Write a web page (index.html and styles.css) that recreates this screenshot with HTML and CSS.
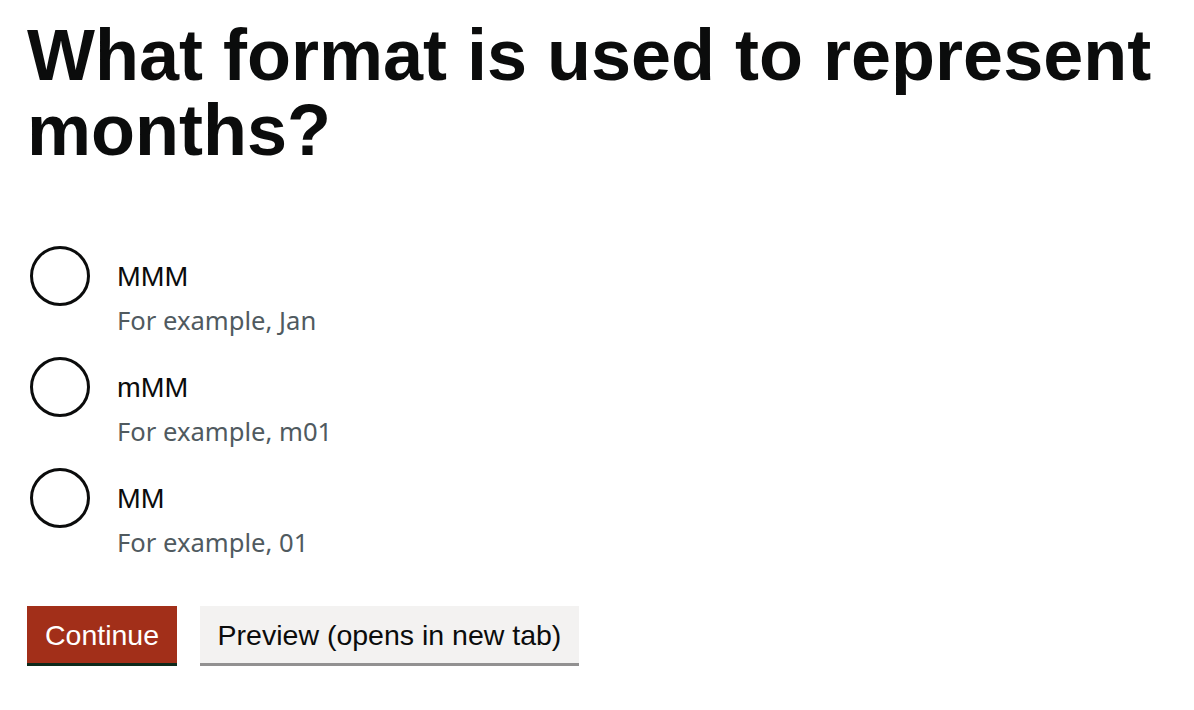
FILE: index.html
```html
<!DOCTYPE html>
<html lang="en">
<head>
<meta charset="utf-8">
<title>What format is used to represent months?</title>
<link rel="stylesheet" href="styles.css">
</head>
<body>
<main class="page">
  <h1 class="heading">What format is used to represent months?</h1>
  <div class="radios">
    <div class="radio-item">
      <span class="radio-circle"></span>
      <div class="radio-text">
        <div class="radio-label">MMM</div>
        <div class="radio-hint">For example, Jan</div>
      </div>
    </div>
    <div class="radio-item">
      <span class="radio-circle"></span>
      <div class="radio-text">
        <div class="radio-label">mMM</div>
        <div class="radio-hint">For example, m01</div>
      </div>
    </div>
    <div class="radio-item">
      <span class="radio-circle"></span>
      <div class="radio-text">
        <div class="radio-label">MM</div>
        <div class="radio-hint">For example, 01</div>
      </div>
    </div>
  </div>
  <div class="buttons">
    <button class="btn btn-primary" type="button">Continue</button>
    <button class="btn btn-secondary" type="button">Preview (opens in new tab)</button>
  </div>
</main>
</body>
</html>
```

FILE: styles.css
```css
html, body {
  margin: 0;
  padding: 0;
  background: #ffffff;
}

.page {
  padding: 17.5px 0 0 27px;
  font-family: "Liberation Sans", Arial, sans-serif;
  color: #0b0c0c;
}

.heading {
  margin: 0;
  font-size: 72px;
  line-height: 75px;
  font-weight: 700;
  width: 1150px;
}

.radios {
  display: flex;
  flex-direction: column;
  gap: 21px;
  margin-top: 78.5px;
}

.radio-item {
  display: flex;
  align-items: flex-start;
}

.radio-circle {
  flex: none;
  box-sizing: border-box;
  width: 60px;
  height: 60px;
  margin-left: 3px;
  border: 3px solid #0b0c0c;
  border-radius: 50%;
}

.radio-text {
  margin-left: 27px;
}

.radio-label {
  padding: 12px 0 7.5px;
  font-size: 28.5px;
  line-height: 37.5px;
}

.radio-hint {
  margin-top: 2px;
  font-family: "Noto Sans", sans-serif;
  font-size: 25.6px;
  line-height: 31px;
  color: #505a5f;
}

.buttons {
  display: flex;
  gap: 23px;
  margin-top: 48px;
}

.btn {
  box-sizing: border-box;
  height: 60px;
  margin: 0;
  padding: 0 15px 3px;
  border: 0;
  border-radius: 0;
  font-family: "Liberation Sans", Arial, sans-serif;
  font-size: 28.5px;
  line-height: 34px;
  cursor: pointer;
}

.btn-primary {
  width: 150px;
  background: #a22f19;
  color: #ffffff;
  box-shadow: inset 0 -3px 0 #0d2a1b;
}

.btn-secondary {
  width: 379px;
  background: #f3f2f1;
  color: #0b0c0c;
  box-shadow: inset 0 -3px 0 #929191;
}
```
